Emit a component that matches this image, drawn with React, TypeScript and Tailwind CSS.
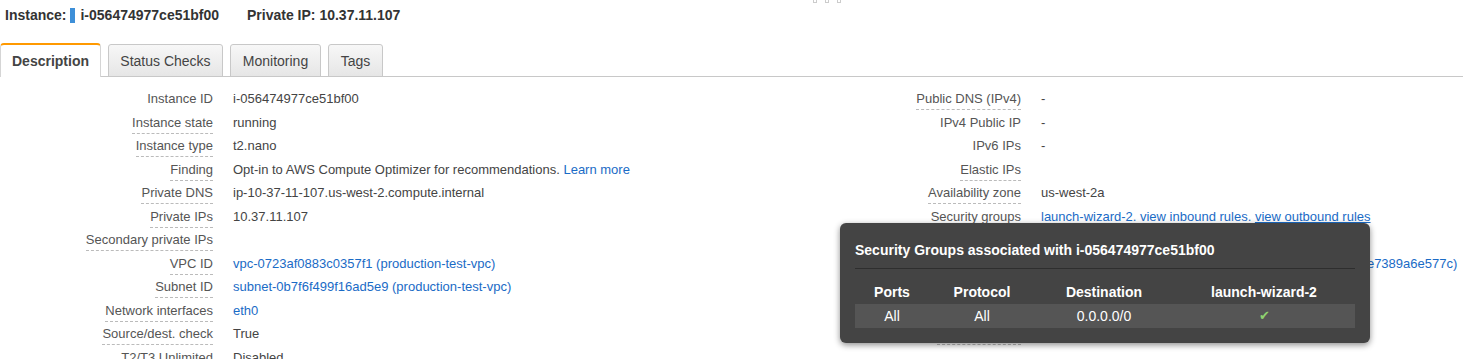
import React from "react";

const font = { fontFamily: '"Liberation Sans", Arial, sans-serif' };

function Row({ label, dashed = true, children }: { label: string; dashed?: boolean; children?: React.ReactNode }) {
  return (
    <div className="flex h-[23.5px] items-start whitespace-nowrap leading-[15px]">
      <div className="w-[213px] shrink-0 text-right text-[#555]">
        <span className={`inline-block align-top leading-[15px] ${dashed ? "border-b border-dashed border-[#bbb] pb-[3px]" : ""}`}>{label}</span>
      </div>
      <div className="pl-5 leading-[15px] text-[#444]">{children}</div>
    </div>
  );
}

const A = ({ children, u }: { children: React.ReactNode; u?: boolean }) => (
  <span className={`text-[#1a6bc6] ${u ? "underline" : ""}`}>{children}</span>
);

export default function App() {
  return (
    <div className="relative min-h-screen overflow-hidden bg-white text-[13px]" style={font}>
      {/* drag handle */}
      <div className="absolute left-[813px] top-0 flex gap-[8px]">
        <div className="h-[3px] w-[4px] border border-t-0 border-[#ccc]" />
        <div className="h-[3px] w-[4px] border border-t-0 border-[#ccc]" />
        <div className="h-[3px] w-[4px] border border-t-0 border-[#ccc]" />
      </div>

      <div className="flex h-[30px] items-center pl-[5px] text-[14px] font-bold text-[#333]">
        <span>Instance:</span>
        <span className="ml-[4px] h-[15px] w-[5px] bg-[#3d8fd8]" />
        <span className="ml-[5px]">i-056474977ce51bf00</span>
        <span className="ml-[28px]">Private IP: 10.37.11.107</span>
      </div>

      <div className="mt-[13px] flex h-[34px] items-end gap-[7px] border-b border-[#c8c8c8] text-[14px] text-[#444]">
        <div className="-mb-px flex h-[34px] w-[101px] items-center justify-center rounded-t-[4px] border-x border-t-2 border-x-[#d5d5d5] border-t-[#f90] bg-white pt-px font-bold">
          Description
        </div>
        <div className="-mb-px flex h-[33px] w-[115px] items-center justify-center rounded-t-[3px] border border-[#c8c8c8] bg-linear-to-b from-[#f7f7f7] to-[#e6e6e6] pt-px">
          Status Checks
        </div>
        <div className="-mb-px flex h-[33px] w-[91px] items-center justify-center rounded-t-[3px] border border-[#c8c8c8] bg-linear-to-b from-[#f7f7f7] to-[#e6e6e6] pt-px">
          Monitoring
        </div>
        <div className="-mb-px flex h-[33px] w-[55px] items-center justify-center rounded-t-[3px] border border-[#c8c8c8] bg-linear-to-b from-[#f7f7f7] to-[#e6e6e6] pt-px">
          Tags
        </div>
      </div>

      <div className="flex pt-[14px]">
        <div className="w-[808px] shrink-0">
          <Row label="Instance ID" dashed={false}>i-056474977ce51bf00</Row>
          <Row label="Instance state">running</Row>
          <Row label="Instance type">t2.nano</Row>
          <Row label="Finding">
            Opt-in to AWS Compute Optimizer for recommendations. <A>Learn more</A>
          </Row>
          <Row label="Private DNS">ip-10-37-11-107.us-west-2.compute.internal</Row>
          <Row label="Private IPs">10.37.11.107</Row>
          <Row label="Secondary private IPs" />
          <Row label="VPC ID">
            <A>vpc-0723af0883c0357f1 (production-test-vpc)</A>
          </Row>
          <Row label="Subnet ID">
            <A>subnet-0b7f6f499f16ad5e9 (production-test-vpc)</A>
          </Row>
          <Row label="Network interfaces">
            <A>eth0</A>
          </Row>
          <Row label="Source/dest. check">True</Row>
          <Row label="T2/T3 Unlimited">Disabled</Row>
        </div>
        <div className="min-w-0 flex-1">
          <Row label="Public DNS (IPv4)">-</Row>
          <Row label="IPv4 Public IP" dashed={false}>-</Row>
          <Row label="IPv6 IPs" dashed={false}>-</Row>
          <Row label="Elastic IPs" />
          <Row label="Availability zone">us-west-2a</Row>
          <Row label="Security groups">
            <A>launch-wizard-2. view inbound rules. </A>
            <A u>view outbound rules</A>
          </Row>
          <Row label="Scheduled events">No scheduled events</Row>
          <Row label="AMI ID">
            <A>amzn2-ami-hvm-2.0.20200207-x86_64-gp2 (ami-0b1c4de7389a6e577c)</A>
          </Row>
          <Row label="Platform">-</Row>
          <Row label="IAM role">-</Row>
          <Row label="Key pair name">production-test</Row>
        </div>
      </div>

      {/* security groups popover */}
      <div className="absolute left-[840px] top-[223px] w-[530px] rounded-[6px] bg-[#444] px-[15px] pb-[15px] pt-[19px] text-white shadow-[0_2px_6px_rgba(0,0,0,0.45)]">
        <div className="text-[14px] font-bold leading-[17px]">Security Groups associated with i-056474977ce51bf00</div>
        <div className="mt-[9px] h-px bg-[#2e2e2e]" />
        <table className="mt-[12px] w-[500px] table-fixed border-collapse text-center text-[14px]">
          <colgroup>
            <col className="w-[74px]" />
            <col className="w-[106px]" />
            <col className="w-[138px]" />
            <col className="w-[182px]" />
          </colgroup>
          <thead>
            <tr className="h-[23px] font-bold">
              <td>Ports</td>
              <td>Protocol</td>
              <td>Destination</td>
              <td>launch-wizard-2</td>
            </tr>
          </thead>
          <tbody>
            <tr className="h-[24px] bg-[#555]">
              <td>All</td>
              <td>All</td>
              <td>0.0.0.0/0</td>
              <td className="text-[13px] text-[#8fd16f]">✔</td>
            </tr>
          </tbody>
        </table>
      </div>
    </div>
  );
}
